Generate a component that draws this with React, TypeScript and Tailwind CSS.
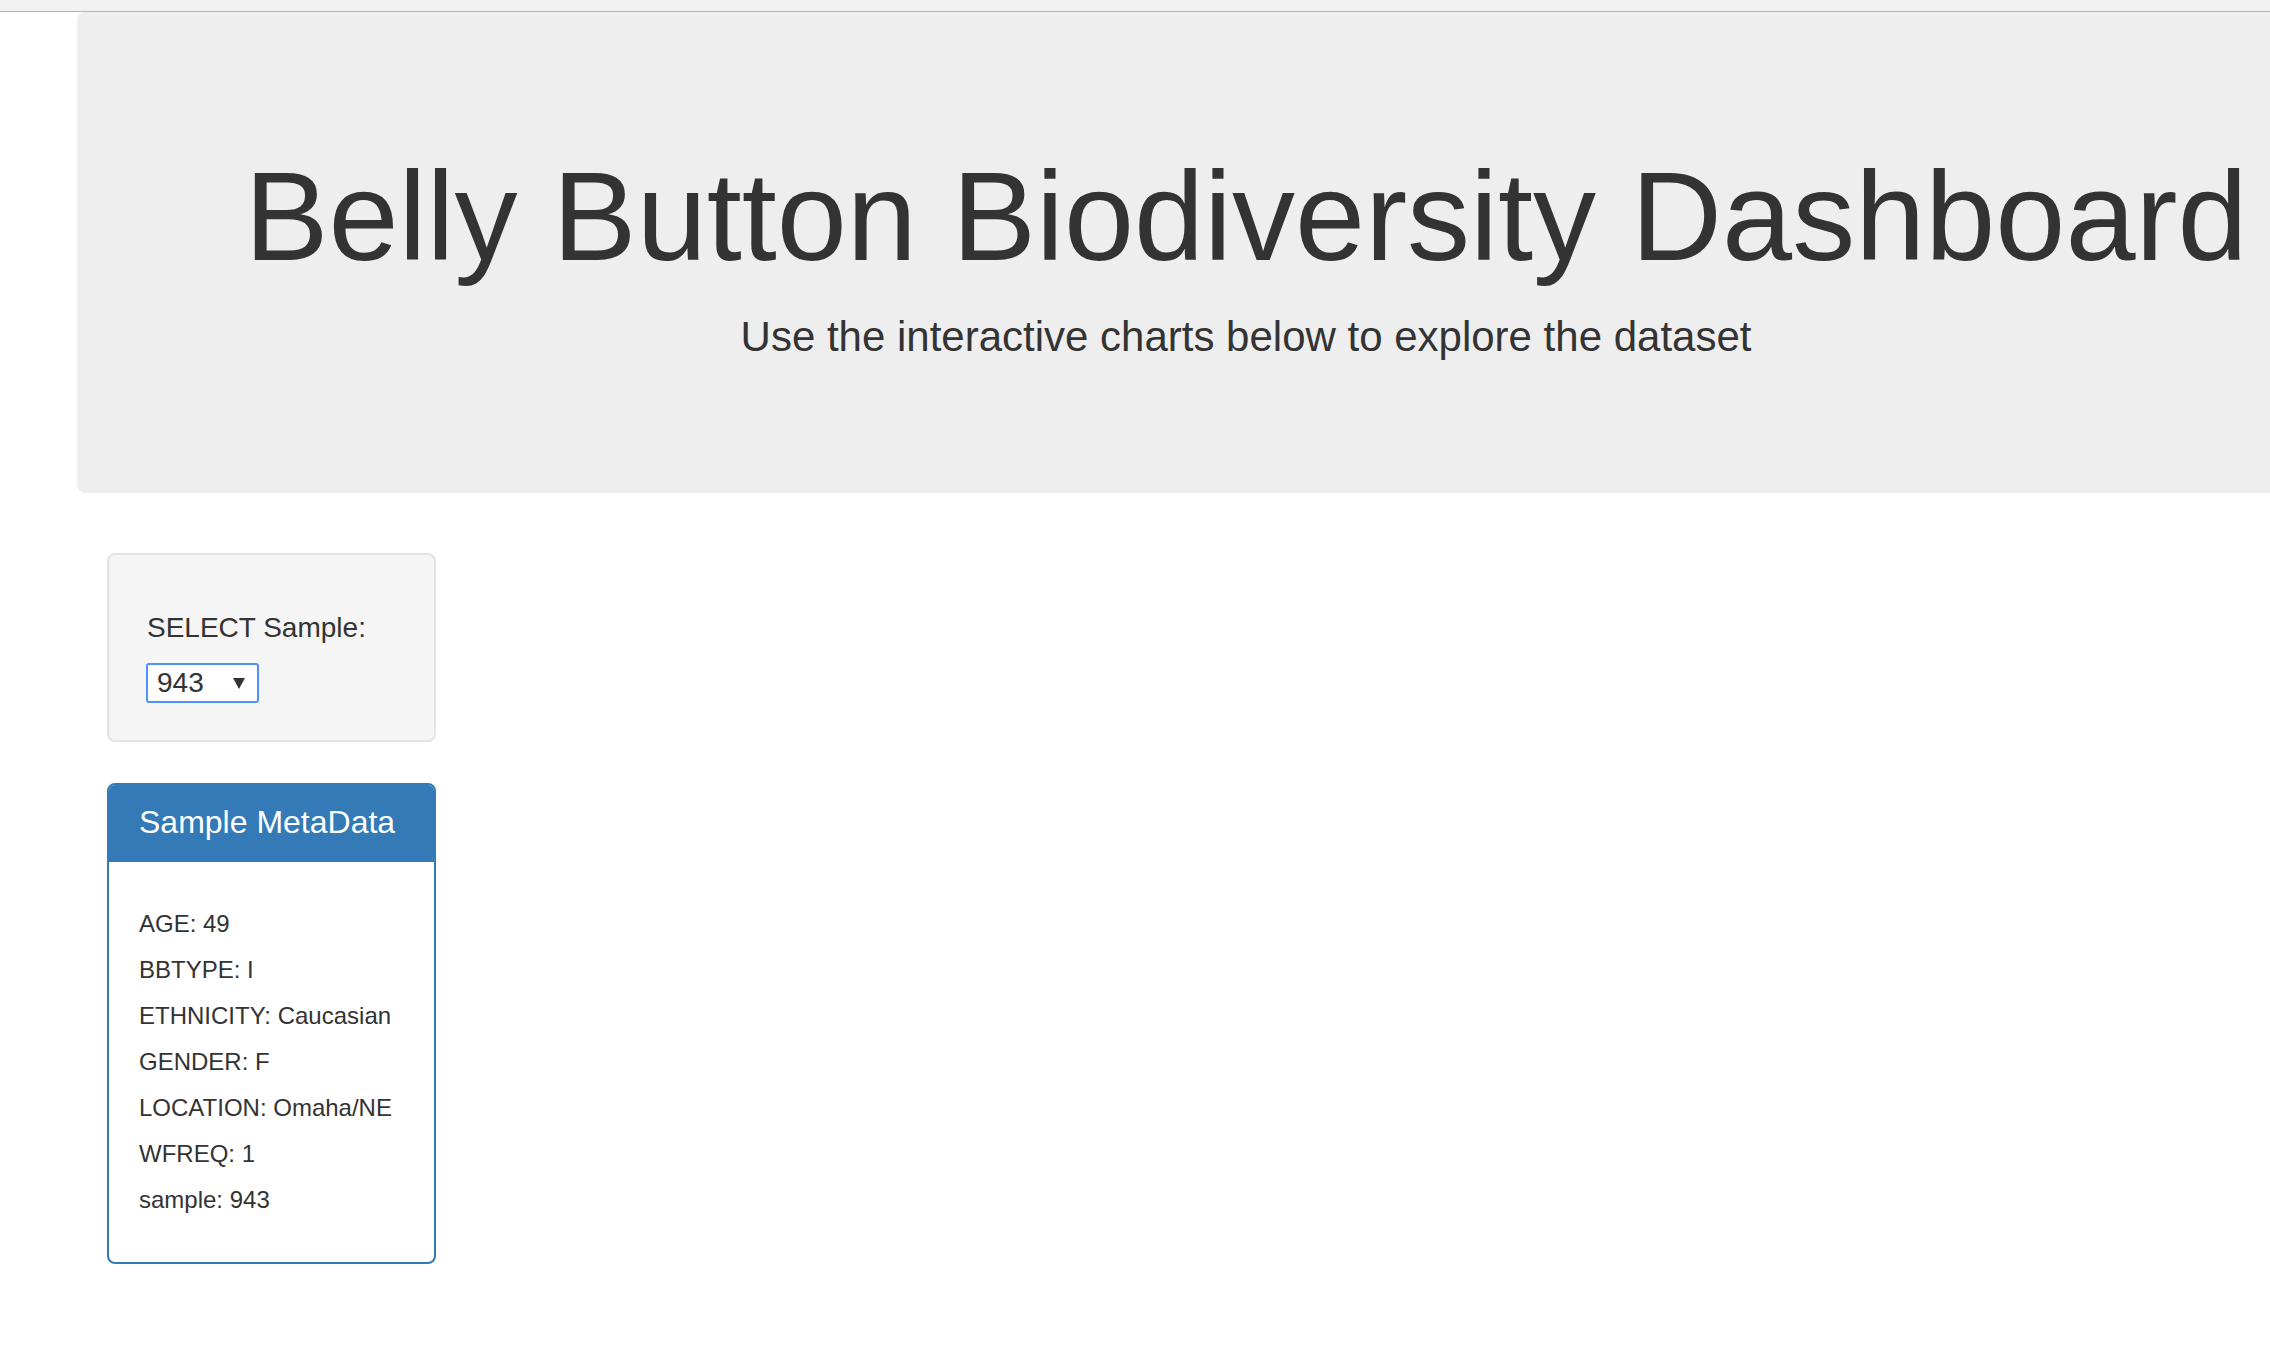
import React from "react";

const rows = [
  "AGE: 49",
  "BBTYPE: I",
  "ETHNICITY: Caucasian",
  "GENDER: F",
  "LOCATION: Omaha/NE",
  "WFREQ: 1",
  "sample: 943",
];

export default function App() {
  return (
    <div
      className="w-[2270px] h-[1354px] overflow-hidden bg-white text-[#333333]"
      style={{ fontFamily: '"Liberation Sans", Arial, sans-serif' }}
    >
      <div className="h-[12px] bg-[#f1f1f1] border-b border-[#b4b4b4]" />
      <div className="ml-[77px] w-[2338px] rounded-[8px] bg-[#eeeeee] pt-[96px] pb-[96px] text-center">
        <h1 className="mt-[40px] mb-[20px] text-[126px] leading-[1.1] font-normal">
          Belly Button Biodiversity Dashboard
        </h1>
        <p className="mb-[30px] text-[42px] leading-[60px] font-normal">
          Use the interactive charts below to explore the dataset
        </p>
      </div>

      <div className="ml-[107px] mt-[60px] w-[329px]">
        <div className="h-[189px] bg-[#f5f5f5] border-2 border-[#e3e3e3] rounded-[8px] px-[38px] pt-[38px]">
          <h5 className="mt-[20px] mb-[20px] text-[28px] leading-[1.1] font-normal">
            SELECT Sample:
          </h5>
          <div className="-ml-[1px] w-[113px] h-[40px] border-2 border-[#4d90fe] rounded-[3px] bg-white flex items-center justify-between pl-[9px] pr-[12px]">
            <span className="text-[28px] leading-none">943</span>
            <svg width="12" height="11" viewBox="0 0 12 11">
              <polygon points="0,0 12,0 6,11" fill="#333333" />
            </svg>
          </div>
        </div>

        <div className="mt-[41px] border-2 border-[#337ab7] rounded-[8px] overflow-hidden">
          <div className="bg-[#337ab7] border-b-2 border-[#337ab7] px-[30px] py-[20px] text-white text-[32px] leading-[1.1]">
            Sample MetaData
          </div>
          <div className="px-[30px] py-[49px] flex flex-col gap-[20px]">
            {rows.map((r) => (
              <h6 key={r} className="text-[24px] leading-[26px] font-normal">
                {r}
              </h6>
            ))}
          </div>
        </div>
      </div>
    </div>
  );
}
